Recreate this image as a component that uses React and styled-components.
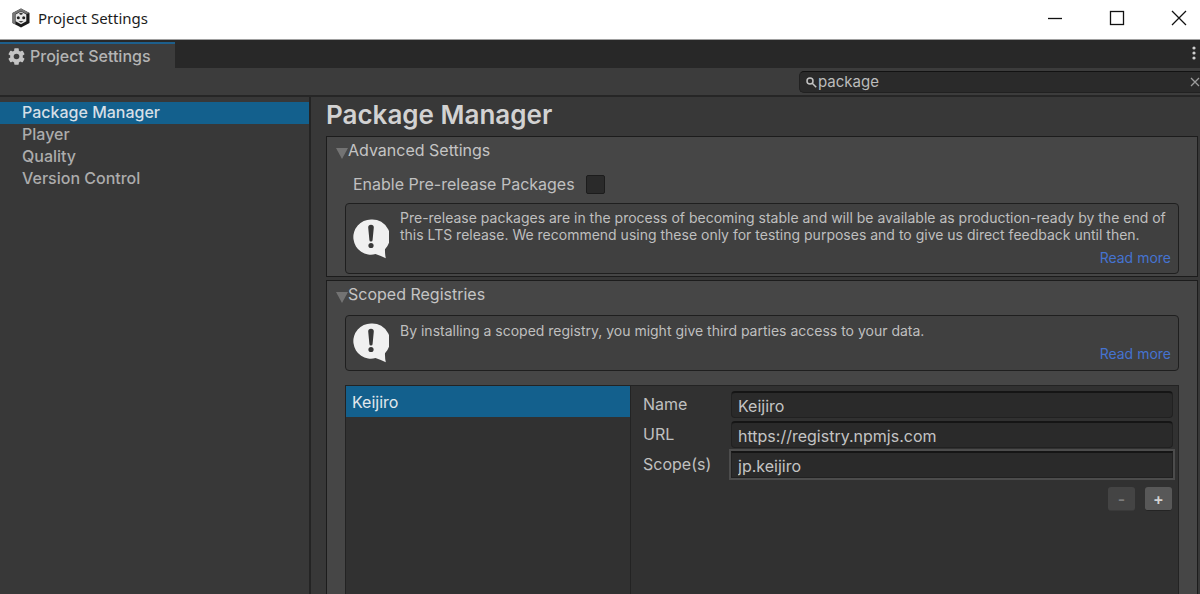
import React from "react";
import styled, { createGlobalStyle } from "styled-components";

const GlobalStyle = createGlobalStyle`
  *, *::before, *::after { box-sizing: border-box; }
  body {
    margin: 0;
    background: #383838;
    color: #c0c0c0;
    font-family: Inter, "Liberation Sans", sans-serif;
    font-size: 16px;
    line-height: 22px;
  }
  button, input { font: inherit; color: inherit; }
  button { padding: 0; border: 0; background: none; }
  ul { list-style: none; margin: 0; padding: 0; }
  h1, h2, p { margin: 0; }
`;

const Window = styled.div`
  display: flex;
  flex-direction: column;
  height: 100vh;
  overflow: hidden;
`;

const TitleBar = styled.header`
  display: flex;
  align-items: center;
  flex: none;
  height: 40px;
  padding: 0 12px 3px;
  background: #fff;
  border-bottom: 1px solid #a0a0a0;
`;

const WindowTitle = styled.span`
  flex: 1;
  margin-left: 8px;
  color: #1c1c1c;
  font-family: "Noto Sans", "Open Sans", sans-serif;
  font-size: 15px;
`;

const WindowControls = styled.div`
  display: flex;
  gap: 46px;
  margin-right: 1px;
`;

const IconButton = styled.button`
  display: flex;
  align-items: center;
  justify-content: center;
  flex: none;
  width: 16px;
  height: 16px;
  color: ${(p) => p.$color};
`;

const TabStrip = styled.div`
  display: flex;
  justify-content: space-between;
  flex: none;
  height: 28px;
  padding-top: 2px;
  background: #282828;
`;

const Tab = styled.button`
  display: flex;
  align-items: center;
  gap: 5px;
  width: 175px;
  padding-left: 8px;
  border-top: 2px solid #1d5f8c;
  background: #3c3c3c;
  color: #b4b4b4;
  font-weight: 500;
`;

const TabMenu = styled(IconButton)`
  width: 13px;
  height: 22px;
`;

const Toolbar = styled.div`
  display: flex;
  justify-content: flex-end;
  flex: none;
  height: 29px;
  padding-top: 3px;
  background: #3c3c3c;
  border-bottom: 2px solid #262626;
`;

const SearchBox = styled.label`
  display: flex;
  align-items: center;
  width: 401px;
  height: 22px;
  padding-left: 6px;
  border: 1px solid #212121;
  border-top-color: #121212;
  border-right: 0;
  border-radius: 5px 0 0 5px;
  background: #2a2a2a;
`;

const SearchInput = styled.input`
  flex: 1;
  min-width: 0;
  padding: 0 0 0 1px;
  border: 0;
  outline: 0;
  background: transparent;
  color: #bcbcbc;
  font-size: 15px;
`;

const ClearButton = styled(IconButton)`
  width: 10px;
`;

const Body = styled.div`
  display: flex;
  flex: 1;
  min-height: 0;
`;

const Sidebar = styled.nav`
  flex: none;
  width: 311px;
  padding-top: 5px;
  border-right: 2px solid #242424;
`;

const SidebarLink = styled.a`
  display: block;
  height: 22px;
  padding-left: 22px;
  background: ${(p) => (p.$active ? "#13608d" : "transparent")};
  color: ${(p) => (p.$active ? "#d6dfe6" : "#acacac")};
  font-weight: 500;
  line-height: 20px;
  text-decoration: none;
`;

const Content = styled.main`
  display: flex;
  flex-direction: column;
  flex: 1;
  min-width: 0;
  padding: 3px 2px 0 15px;
`;

const PageTitle = styled.h1`
  height: 36px;
  color: #d2d2d2;
  font-size: 26px;
  font-weight: 600;
  line-height: 30px;
`;

const Section = styled.section`
  display: flex;
  flex-direction: column;
  flex: ${(p) => (p.$fill ? "1" : "none")};
  margin-bottom: ${(p) => (p.$fill ? "0" : "3px")};
  padding: 2px 18px ${(p) => (p.$fill ? "0" : "2px")};
  border: 1px solid #1c1c1c;
  border-bottom-width: ${(p) => (p.$fill ? "0" : "1px")};
  background: #464646;
`;

const SectionTitle = styled.h2`
  font-size: 16px;
  font-weight: 400;
`;

const Foldout = styled.button`
  display: flex;
  height: 22px;
  margin-left: -9px;
  color: #c4c4c4;

  svg { margin-top: 8px; }
`;

const CheckRow = styled.label`
  display: flex;
  align-items: center;
  gap: 11px;
  height: 24px;
  margin: 11px 0 7px 8px;
`;

const CheckBox = styled.input`
  appearance: none;
  width: 19px;
  height: 19px;
  margin: 0;
  border: 1px solid #1c1c1c;
  border-radius: 2px;
  background: #2a2a2a;
`;

const HelpBox = styled.div`
  display: flex;
  align-items: center;
  gap: 11px;
  margin-top: ${(p) => (p.$spaced ? "10px" : "0")};
  padding: ${(p) => (p.$spaced ? "6px" : "5px")} 7px;
  border: 1px solid #1f1f1f;
  border-radius: 4px;
  background: #404040;
`;

const HelpBody = styled.div`
  display: flex;
  flex-direction: column;
  flex: 1;
  gap: 5px;
`;

const HelpText = styled.p`
  color: #bfbfbf;
  font-size: 14px;
  line-height: 17px;
`;

const HelpLink = styled.a`
  align-self: flex-end;
  color: #4573d0;
  font-size: 14px;
  line-height: 20px;
  text-decoration: none;
`;

const Registry = styled.div`
  display: flex;
  flex: 1;
  margin-top: 14px;
  border: 1px solid #232323;
  border-bottom: 0;
  background: #313131;
`;

const RegistryList = styled.ul`
  flex: none;
  width: 285px;
  border-right: 1px solid #232323;
`;

const RegistryItem = styled.button`
  display: block;
  width: 100%;
  height: 31px;
  padding-left: 6px;
  background: #13608d;
  color: #e2e8ec;
  text-align: left;
`;

const RegistryForm = styled.form`
  flex: 1;
  padding: 5px 5px 0 12px;
`;

const Field = styled.label`
  display: flex;
  height: 27px;
  margin-bottom: 3px;
`;

const FieldLabel = styled.span`
  flex: none;
  width: 88px;
  line-height: 26px;
`;

const FieldInput = styled.input`
  flex: 1;
  min-width: 0;
  height: 27px;
  padding: 2px 6px 0;
  border: 1px solid #212121;
  border-top: 2px solid #151515;
  border-radius: 4px;
  outline: 0;
  background: #2a2a2a;
  color: #c4c4c4;
  ${(p) =>
    p.$focused &&
    `
    border-radius: 0;
    box-shadow: 0 0 0 2px #4c4c4c;
  `}
`;

const ButtonRow = styled.div`
  display: flex;
  justify-content: flex-end;
  gap: 10px;
  padding: 6px 1px 0 0;
`;

const SmallButton = styled.button`
  width: 27px;
  height: 24px;
  border-bottom: 1px solid #242424;
  border-radius: 3px;
  background: #585858;
  color: #d2d2d2;
  font-size: 16px;
  font-weight: 600;
  line-height: 22px;
  &:disabled {
    background: #444;
    border-color: #3a3a3a;
    color: #7c7c7c;
  }
`;

const AppLogo = () => (
  <svg width="18" height="20" viewBox="0 0 18 20" aria-hidden="true">
    <path d="M9 .5 17.500 5v10L9 19.500.5 15V5z" fill="#1a1a1a" />
    <path d="M9 .5.5 5v10L3.500 16.500V6L9 3l5.500 3 3-1z" fill="#777" />
    <path d="M9 3.500 14.300 6.500v6.800L9 16.300 3.700 13.300V6.500z" fill="#e8e8e8" />
    <path d="M9 4.400 11.200 5.700 9 7 6.800 5.700z" fill="#333" />
    <circle cx="6.300" cy="9.800" r="1.500" fill="#222" />
    <circle cx="11.700" cy="9.800" r="1.500" fill="#222" />
    <path d="M6.500 13h5L9 14.800z" fill="#444" />
  </svg>
);

const Gear = () => (
  <svg width="17" height="17" viewBox="0 0 17 17" aria-hidden="true">
    <g fill="#c4c4c4">
      {[0, 60, 120].map((a) => (
        <rect key={a} x="6.200" y="0.300" width="4.600" height="16.400" rx="0.800" transform={`rotate(${a} 8.500 8.500)`} />
      ))}
      <circle cx="8.500" cy="8.500" r="6.300" />
    </g>
    <circle cx="8.500" cy="8.500" r="2.800" fill="#3c3c3c" />
  </svg>
);

const Triangle = () => (
  <svg width="12" height="12" viewBox="0 0 12 12" aria-hidden="true">
    <path d="M0 1h12L6 12z" fill="#737373" />
  </svg>
);

const Alert = () => (
  <svg width="36" height="40" viewBox="0 0 36 40" aria-hidden="true">
    <path d="M18 .5a17.600 17.600 0 1 0 4.500 34.600q5.500 1.800 10.300 4.200-1-4.500-.8-9A17.600 17.600 0 0 0 18 .5z" fill="#f0f0f0" />
    <path d="M15.200 8.500a2.800 2.800 0 0 1 5.600 0L19.600 21a1.600 1.600 0 0 1-3.200 0z" fill="#383838" />
    <circle cx="18" cy="26.500" r="2.600" fill="#383838" />
  </svg>
);

const Foldable = ({ children }) => (
  <SectionTitle>
    <Foldout type="button" aria-expanded="true">
      <Triangle />
      {children}
    </Foldout>
  </SectionTitle>
);

const Help = ({ children, spaced }) => (
  <HelpBox $spaced={spaced}>
    <Alert />
    <HelpBody>
      <HelpText>{children}</HelpText>
      <HelpLink href="#docs">Read more</HelpLink>
    </HelpBody>
  </HelpBox>
);

const categories = ["Package Manager", "Player", "Quality", "Version Control"];
const fields = [
  ["Name", "Keijiro"],
  ["URL", "https://registry.npmjs.com"],
  ["Scope(s)", "jp.keijiro"],
];

export default function App() {
  return (
    <Window>
      <GlobalStyle />
      <TitleBar>
        <AppLogo />
        <WindowTitle>Project Settings</WindowTitle>
        <WindowControls>
          <IconButton $color="#111" aria-label="Minimize">
            <svg width="16" height="16"><path d="M1 8.500h14" stroke="currentColor" strokeWidth="1.300" /></svg>
          </IconButton>
          <IconButton $color="#111" aria-label="Maximize">
            <svg width="16" height="16"><rect x="1.500" y="1.500" width="13" height="13" fill="none" stroke="currentColor" strokeWidth="1.300" /></svg>
          </IconButton>
          <IconButton $color="#111" aria-label="Close">
            <svg width="16" height="16"><path d="M1 1l14 14M15 1 1 15" stroke="currentColor" strokeWidth="1.300" /></svg>
          </IconButton>
        </WindowControls>
      </TitleBar>
      <TabStrip>
        <Tab type="button"><Gear />Project Settings</Tab>
        <TabMenu $color="#cfcfcf" aria-label="Tab menu">
          <svg width="4" height="16" fill="currentColor">
            <circle cx="2" cy="3" r="1.600" /><circle cx="2" cy="8" r="1.600" /><circle cx="2" cy="13" r="1.600" />
          </svg>
        </TabMenu>
      </TabStrip>
      <Toolbar>
        <SearchBox>
          <svg width="11" height="11" viewBox="0 0 11 11" fill="none" stroke="#c4c4c4" strokeWidth="1.500" aria-hidden="true">
            <circle cx="4" cy="4" r="3" /><path d="m6.200 6.200 4 4" />
          </svg>
          <SearchInput aria-label="Search" defaultValue="package" />
          <ClearButton $color="#9c9c9c" aria-label="Clear search" type="button">
            <svg width="10" height="10"><path d="m1 1 8 8M9 1 1 9" stroke="currentColor" strokeWidth="1.300" /></svg>
          </ClearButton>
        </SearchBox>
      </Toolbar>
      <Body>
        <Sidebar>
          <ul>
            {categories.map((c, i) => (
              <li key={c}><SidebarLink href="#settings" $active={i === 0}>{c}</SidebarLink></li>
            ))}
          </ul>
        </Sidebar>
        <Content>
          <PageTitle>Package Manager</PageTitle>
          <Section>
            <Foldable>Advanced Settings</Foldable>
            <CheckRow>
              Enable Pre-release Packages
              <CheckBox type="checkbox" />
            </CheckRow>
            <Help>
              Pre-release packages are in the process of becoming stable and will be available as
              production-ready by the end of this LTS release. We recommend using these only for
              testing purposes and to give us direct feedback until then.
            </Help>
          </Section>
          <Section $fill>
            <Foldable>Scoped Registries</Foldable>
            <Help spaced>By installing a scoped registry, you might give third parties access to your data.</Help>
            <Registry>
              <RegistryList>
                <li><RegistryItem type="button">Keijiro</RegistryItem></li>
              </RegistryList>
              <RegistryForm>
                {fields.map(([label, value]) => (
                  <Field key={label}>
                    <FieldLabel>{label}</FieldLabel>
                    <FieldInput defaultValue={value} $focused={label === "Scope(s)"} />
                  </Field>
                ))}
                <ButtonRow>
                  <SmallButton type="button" disabled aria-label="Remove scope">-</SmallButton>
                  <SmallButton type="button" aria-label="Add scope">+</SmallButton>
                </ButtonRow>
              </RegistryForm>
            </Registry>
          </Section>
        </Content>
      </Body>
    </Window>
  );
}
